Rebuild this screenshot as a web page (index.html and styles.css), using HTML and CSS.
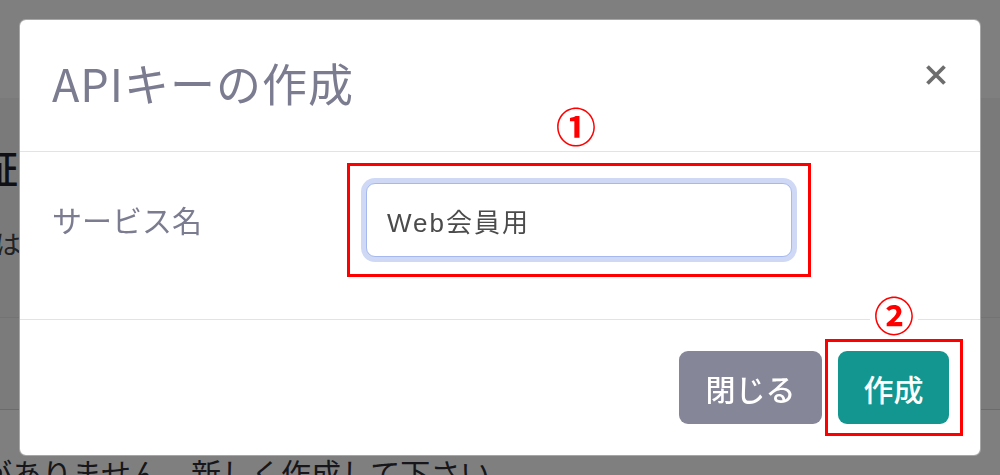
FILE: index.html
```html
<!DOCTYPE html>
<html lang="ja">
<head>
<meta charset="utf-8">
<title>APIキーの作成</title>
<link rel="stylesheet" href="styles.css">
</head>
<body>
<div class="page">
  <div class="page-top"></div>
  <div class="page-band">
    <h1 class="page-title">証</h1>
    <p class="page-lead">は</p>
  </div>
  <div class="page-table-head"></div>
  <div class="page-empty">がありません。新しく作成して下さい。</div>
</div>

<div class="overlay">
  <div class="modal">
    <div class="modal-header">
      <h2 class="modal-title">APIキーの作成</h2>
      <button class="close" type="button" aria-label="閉じる">
        <svg width="22" height="22" viewBox="0 0 22 22"><path d="M2.5 2.5 L19.5 19.5 M19.5 2.5 L2.5 19.5" stroke="#6d6d6d" stroke-width="3.8" stroke-linecap="butt" fill="none"/></svg>
      </button>
    </div>
    <div class="modal-body">
      <label class="field-label" for="svc">サービス名</label>
      <div class="mark-box">
        <span class="mark-num mark-num-1">①</span>
        <input id="svc" class="field-input" type="text" value="Web会員用">
      </div>
    </div>
    <div class="modal-footer">
      <button class="btn btn-secondary" type="button">閉じる</button>
      <div class="mark-box mark-box-btn">
        <span class="mark-num mark-num-2">②</span>
        <button class="btn btn-primary" type="button">作成</button>
      </div>
    </div>
  </div>
</div>
</body>
</html>
```

FILE: styles.css
```css
* { box-sizing: border-box; }

html, body {
  margin: 0;
  padding: 0;
  width: 1000px;
  height: 475px;
  overflow: hidden;
  background: #ffffff;
  font-family: "Noto Sans CJK JP", "Noto Sans", sans-serif;
}

/* ---------- page behind the dialog ---------- */
.page {
  width: 1000px;
  height: 475px;
  overflow: hidden;
}
.page-top {
  height: 98px;
  background: #ffffff;
}
.page-band {
  height: 220px;
  background: #f5f5f6;
  border-bottom: 1px solid #e4e6ee;
  padding-top: 44px;
}
.page-title {
  margin: 0 0 0 -20px;
  font-size: 38px;
  line-height: 50px;
  font-weight: 500;
  color: #1f1f2a;
  white-space: nowrap;
}
.page-lead {
  margin: 36px 0 0 -5px;
  font-size: 26px;
  line-height: 30px;
  color: #444;
  white-space: nowrap;
}
.page-table-head {
  height: 92px;
  background: #f7f7f7;
  border-bottom: 1px solid #d6d6d6;
}
.page-empty {
  margin: 42px 0 0 -18px;
  font-size: 30px;
  line-height: 40px;
  color: #2e2e36;
  white-space: nowrap;
}

/* ---------- overlay / dialog ---------- */
.overlay {
  position: fixed;
  inset: 0;
  background: rgba(0, 0, 0, 0.5);
  padding: 19px;
}
.modal {
  width: 962px;
  height: 437px;
  background: #ffffff;
  border: 1px solid rgba(0, 0, 0, 0.35);
  border-radius: 7px;
  display: flex;
  flex-direction: column;
}

.modal-header {
  height: 132px;
  display: flex;
  align-items: center;
  justify-content: space-between;
  padding: 0 33px 6px 32px;
  border-bottom: 1px solid #dfe3ef;
}
.modal-title {
  margin: 0;
  font-size: 45px;
  line-height: 1;
  font-weight: 400;
  color: #7b7c90;
  letter-spacing: 1px;
}
.close {
  border: 0;
  background: transparent;
  padding: 0;
  width: 22px;
  height: 22px;
  align-self: flex-start;
  margin-top: 44px;
  display: block;
}
.close svg { display: block; }

.modal-body {
  flex: 0 0 auto;
  display: flex;
  align-items: center;
  padding: 11px 0 42px 32px;
  border-bottom: 1px solid #dfe3ef;
}
.field-label {
  width: 295px;
  font-size: 30px;
  line-height: 1;
  color: #7b7c90;
  padding-bottom: 2px;
}

.mark-box {
  position: relative;
  border: 3px solid #ff0000;
  padding: 17px 16px;
}
.mark-num {
  position: absolute;
  left: 50%;
  transform: translateX(-50%);
  color: #ff0000;
  font-size: 40px;
  line-height: 40px;
  font-weight: 700;
  background: #ffffff;
  padding: 0 4px;
}
.mark-num-1 { top: -61px; margin-left: -3px; }
.mark-num-2 { top: -48px; }

.field-input {
  display: block;
  width: 426px;
  height: 74px;
  border: 1px solid #a6b9ee;
  border-radius: 9px;
  box-shadow: 0 0 0 5px #cfd9f6;
  padding: 0 20px;
  font-family: "Liberation Sans", "Noto Sans CJK JP", sans-serif;
  font-size: 26px;
  letter-spacing: 2px;
  color: #4b4b4b;
  background: #ffffff;
  outline: none;
}

.modal-footer {
  flex: 1 1 auto;
  display: flex;
  justify-content: flex-end;
  align-items: center;
  padding: 0 17px 0 0;
}
.btn {
  border: 0;
  height: 73px;
  border-radius: 9px;
  font-family: "Noto Sans CJK JP", sans-serif;
  font-size: 30px;
  font-weight: 500;
  color: #ffffff;
  padding: 0;
  white-space: nowrap;
  text-align: center;
  display: block;
}
.btn-secondary {
  width: 143px;
  background: #858697;
  margin-right: 3px;
}
.btn-primary {
  width: 111px;
  background: #12968f;
}
.mark-box-btn {
  padding: 9px 11px 9px 10px;
}
```
